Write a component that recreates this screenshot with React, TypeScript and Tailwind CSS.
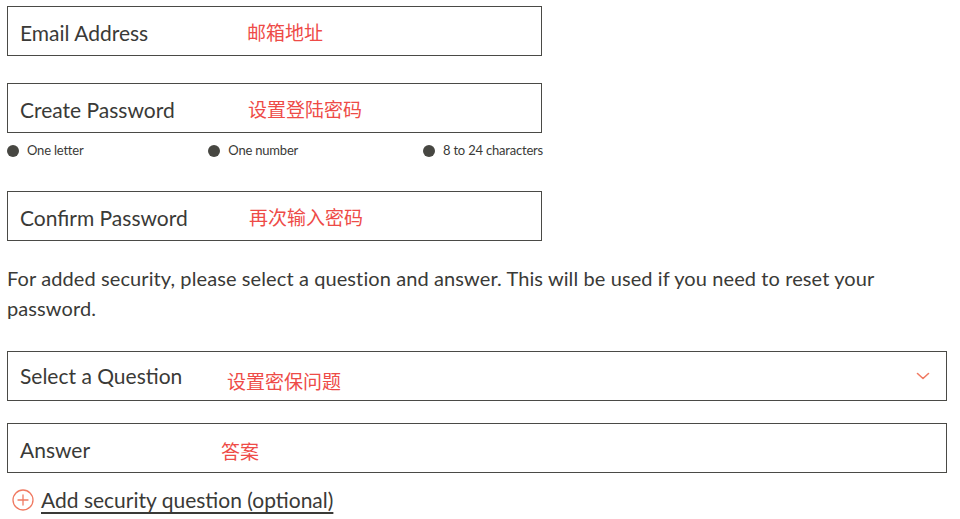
import React from "react";

const latin = "font-['Lato','Noto_Sans',sans-serif]";
const cjk = "font-['Noto_Sans_CJK_SC',sans-serif]";

function Field({
  label,
  note,
  noteX,
  noteDy = 0,
  wide = false,
  chevron = false,
}: {
  label: string;
  note: string;
  noteX: number;
  noteDy?: number;
  wide?: boolean;
  chevron?: boolean;
}) {
  return (
    <div
      className={`relative flex h-[50px] items-center border border-[#4a4a46] pl-[12px] ${
        chevron ? "pt-0" : "pt-[4px]"
      } ${wide ? "w-[940px]" : "w-[535px]"}`}
    >
      <span className={`${latin} text-[21px] leading-[26px] text-[#3a3a37]`}>{label}</span>
      <span
        className={`${cjk} absolute text-[19px] leading-none text-[#ee4b47]`}
        style={{ left: noteX, top: 15 + noteDy }}
      >
        {note}
      </span>
      {chevron && (
        <svg
          viewBox="0 0 14 8"
          className="absolute right-[16px] top-[20px] h-[8px] w-[14px]"
          fill="none"
          stroke="#f07a62"
          strokeWidth="1.6"
        >
          <path d="M1.5 1.5l5.5 5 5.5-5" strokeLinecap="round" strokeLinejoin="round" />
        </svg>
      )}
    </div>
  );
}

function Rule({ text }: { text: string }) {
  return (
    <div className="flex items-center gap-[8px]">
      <span className="h-[12px] w-[12px] rounded-full bg-[#474742]" />
      <span className={`${latin} text-[13px] tracking-[-0.2px] text-[#3a3a37]`}>{text}</span>
    </div>
  );
}

export default function App() {
  return (
    <div className="min-h-screen bg-white pl-[7px] pt-[6px]">
      <Field label="Email Address" note="邮箱地址" noteX={239} />

      <div className="mt-[27px]">
        <Field label="Create Password" note="设置登陆密码" noteX={240} />
      </div>

      <div className="mt-[9px] flex h-[18px] w-[536px] items-center justify-between">
        <Rule text="One letter" />
        <Rule text="One number" />
        <Rule text="8 to 24 characters" />
      </div>

      <div className="mt-[31px]">
        <Field label="Confirm Password" note="再次输入密码" noteX={241} />
      </div>

      <p className={`${latin} mt-[22px] w-[900px] text-[20px] leading-[30px] tracking-[0.1px] text-[#3a3a37]`}>
        For added security, please select a question and answer. This will be used if you need to reset your password.
      </p>

      <div className="mt-[28px]">
        <Field label="Select a Question" note="设置密保问题" noteX={219} noteDy={4} wide chevron />
      </div>

      <div className="mt-[22px]">
        <Field label="Answer" note="答案" noteX={213} noteDy={2} wide />
      </div>

      <div className="mt-[15px] flex h-[24px] items-center gap-[7px] pl-[5px]">
        <svg viewBox="0 0 22 22" className="h-[22px] w-[22px]" fill="none" stroke="#f07a62" strokeWidth="1.3">
          <circle cx="11" cy="11" r="10" />
          <path d="M11 6v10M6 11h10" strokeLinecap="round" />
        </svg>
        <span className={`${latin} text-[21px] text-[#3a3a37] underline underline-offset-[4px]`}>
          Add security question (optional)
        </span>
      </div>
    </div>
  );
}
